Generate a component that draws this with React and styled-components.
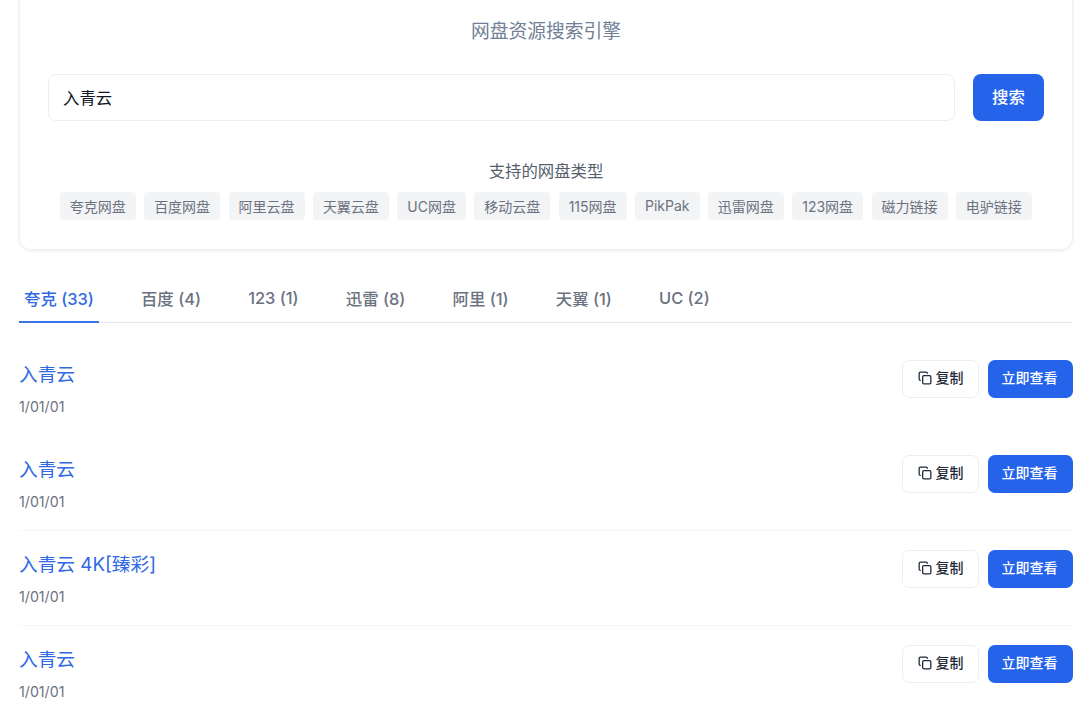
import React from "react"
import styled, { createGlobalStyle } from "styled-components"

const GlobalStyle = createGlobalStyle`
  html, body {
    margin: 0;
    padding: 0;
    height: 701px;
    overflow: hidden;
    background: #fff;
    font-family: Inter, "Noto Sans CJK SC", sans-serif;
  }
  * {
    box-sizing: border-box;
  }
`

const Page = styled.div`
  margin-top: -20px;
  padding: 0 7px 0 19px;
`

const Card = styled.section`
  height: 270px;
  padding: 39px 29px 0;
  border: 1px solid #eef0f3;
  border-radius: 12px;
  box-shadow: 0 1px 3px rgba(0, 0, 0, 0.08);
  display: flex;
  flex-direction: column;
  align-items: center;
`

const Subtitle = styled.p`
  margin: 0;
  font-size: 18.75px;
  line-height: 24px;
  color: #718096;
`

const SearchRow = styled.form`
  width: 996px;
  margin-top: 30px;
  display: flex;
  gap: 18px;
`

const SearchInput = styled.div`
  flex: 1;
  height: 47px;
  padding: 0 14px 2px;
  display: flex;
  align-items: center;
  border: 1px solid #eceef1;
  border-radius: 8px;
  font-size: 16.4px;
  color: #111827;
`

const SearchButton = styled.button`
  width: 71px;
  height: 47px;
  padding: 0 0 3px;
  border: 0;
  border-radius: 8px;
  background: #2563eb;
  color: #fff;
  font: 500 16.4px Inter, "Noto Sans CJK SC", sans-serif;
`

const SupportTitle = styled.h2`
  margin: 40px 0 0;
  font-size: 16.4px;
  line-height: 20px;
  font-weight: 400;
  color: #555e6b;
`

const TagList = styled.div`
  margin-top: 11px;
  display: flex;
  justify-content: center;
  gap: 8.4px;
`

const Tag = styled.span`
  height: 28px;
  padding: 0 10.2px 1px 9.8px;
  display: flex;
  align-items: center;
  border-radius: 4px;
  background: #f3f4f6;
  font-size: 14px;
  color: #6b7280;
  white-space: nowrap;
`

const Tabs = styled.nav`
  margin-top: 26px;
  height: 47px;
  display: flex;
  gap: 37.2px;
  border-bottom: 1px solid #e5e7eb;
`

const Tab = styled.a`
  height: 47px;
  padding: 0 5px 2px;
  display: flex;
  align-items: center;
  font-size: 16.4px;
  font-weight: 500;
  color: ${(p) => (p.$active ? "#2f69e4" : "#6b7280")};
  border-bottom: 2px solid ${(p) => (p.$active ? "#3b74e6" : "transparent")};
`

const ResultList = styled.div`
  margin-top: 18px;
`

const Item = styled.article`
  height: 95px;
  padding-top: 19px;
  display: flex;
  justify-content: space-between;
  align-items: flex-start;
  border-bottom: 1px solid #f5f6f7;

  &:first-child {
    border-bottom-color: transparent;
  }
`

const ItemText = styled.div`
  display: flex;
  flex-direction: column;
`

const ItemTitle = styled.a`
  margin-top: 1px;
  font-size: 18.7px;
  line-height: 28px;
  color: #2f69e4;
`

const ItemDate = styled.span`
  margin-top: 8px;
  font-size: 14.2px;
  line-height: 20px;
  color: #6b7280;
`

const Actions = styled.div`
  display: flex;
  gap: 9px;
`

const CopyButton = styled.button`
  width: 77px;
  height: 38px;
  padding: 0 0 4px;
  display: flex;
  align-items: center;
  justify-content: center;
  gap: 4px;
  background: #fff;
  border: 1px solid #eceef1;
  border-radius: 7px;
  color: #1f2937;
  font: 500 14px Inter, "Noto Sans CJK SC", sans-serif;

  svg {
    margin-top: 2px;
  }
`

const ViewButton = styled.button`
  width: 85px;
  height: 38px;
  padding: 0 2px 4px 0;
  border: 0;
  border-radius: 7px;
  background: #2563eb;
  color: #fff;
  font: 500 14px Inter, "Noto Sans CJK SC", sans-serif;
`

const CopyIcon = () => (
  <svg width="14" height="14" viewBox="0 0 24 24" fill="none" stroke="currentColor" strokeWidth="2.2" strokeLinecap="round" strokeLinejoin="round">
    <rect x="8" y="8" width="14" height="14" rx="2" />
    <path d="M4 16c-1.1 0-2-.9-2-2V4c0-1.1.9-2 2-2h10c1.1 0 2 .9 2 2" />
  </svg>
)

const tags = ["夸克网盘", "百度网盘", "阿里云盘", "天翼云盘", "UC网盘", "移动云盘", "115网盘", "PikPak", "迅雷网盘", "123网盘", "磁力链接", "电驴链接"]
const tabs = ["夸克 (33)", "百度 (4)", "123 (1)", "迅雷 (8)", "阿里 (1)", "天翼 (1)", "UC (2)"]
const results = ["入青云", "入青云", "入青云 4K[臻彩]", "入青云"]

export default function App() {
  return (
    <Page>
      <GlobalStyle />
      <Card>
        <Subtitle>网盘资源搜索引擎</Subtitle>
        <SearchRow>
          <SearchInput>入青云</SearchInput>
          <SearchButton type="button">搜索</SearchButton>
        </SearchRow>
        <SupportTitle>支持的网盘类型</SupportTitle>
        <TagList>
          {tags.map((t) => (
            <Tag key={t}>{t}</Tag>
          ))}
        </TagList>
      </Card>
      <Tabs>
        {tabs.map((t, i) => (
          <Tab key={t} $active={i === 0}>{t}</Tab>
        ))}
      </Tabs>
      <ResultList>
        {results.map((r, i) => (
          <Item key={i}>
            <ItemText>
              <ItemTitle>{r}</ItemTitle>
              <ItemDate>1/01/01</ItemDate>
            </ItemText>
            <Actions>
              <CopyButton type="button"><CopyIcon />复制</CopyButton>
              <ViewButton type="button">立即查看</ViewButton>
            </Actions>
          </Item>
        ))}
      </ResultList>
    </Page>
  )
}
